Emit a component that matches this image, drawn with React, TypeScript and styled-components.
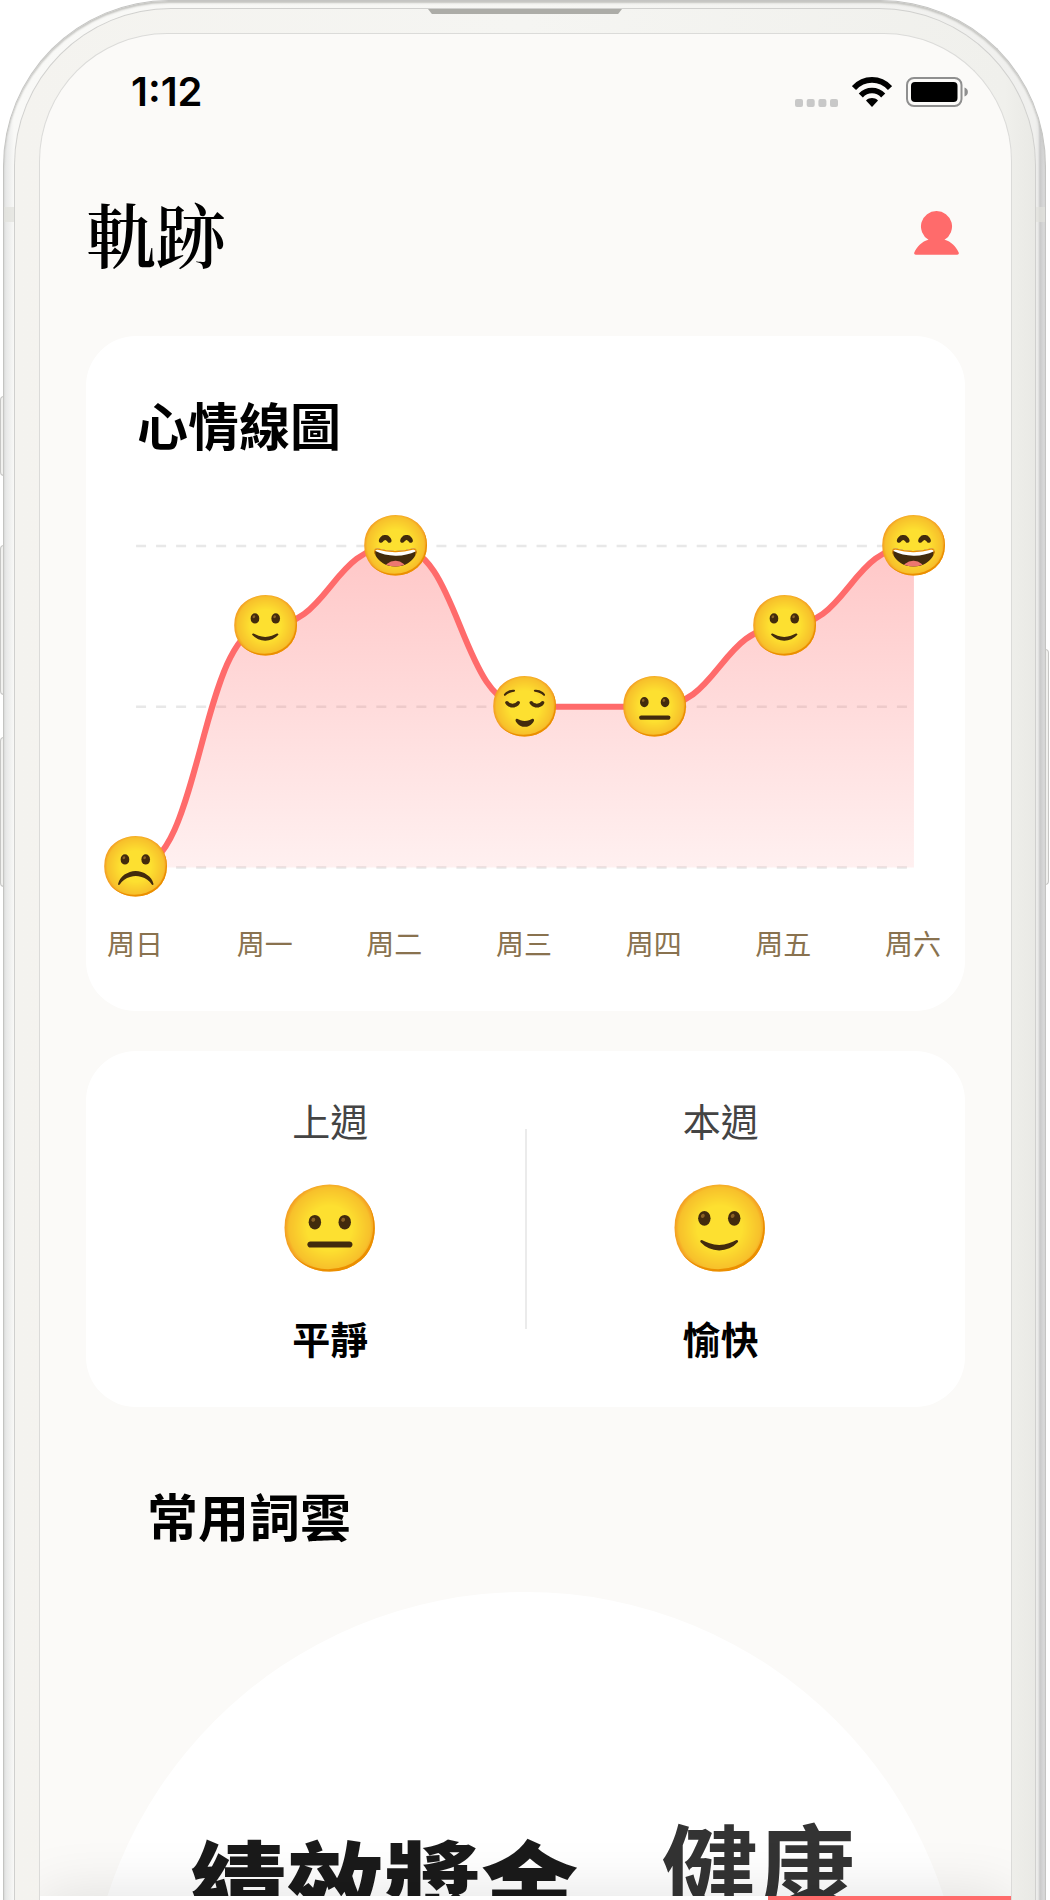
import React from "react";
import styled, { createGlobalStyle } from "styled-components";

const GlobalStyle = createGlobalStyle`
  *, *::before, *::after { box-sizing: border-box; }
  body {
    margin: 0;
    background: #ffffff;
    color: #000000;
    font-family: "Noto Sans CJK TC", "Noto Sans", sans-serif;
  }
  h1, h2, p { margin: 0; }
`;

const Stage = styled.div`
  height: 100vh;
  padding: 0 4px 0 3px;
  overflow: hidden;
`;

const Phone = styled.div`
  position: relative;
  height: calc(100vh + 160px);
  padding: 7px 9px 0 10px;
  border: 1px solid #c4c4c2;
  border-bottom: 0;
  border-radius: 166px 166px 0 0;
  background: linear-gradient(90deg, #e3e4e4 0, #f9f9f7 10px, #f6f6f3 50%, #f0f0ee calc(100% - 10px), #e9e9e8 calc(100% - 7px), #c9c9c9 calc(100% - 5px), #dededf 100%);
  box-shadow: inset 0 2px 2px #c4c4c0;
`;

const SideKey = styled.span<{ $side: "left" | "right"; $top: number; $height: number }>`
  position: absolute;
  top: ${(p) => p.$top}px;
  ${(p) => p.$side}: -4px;
  width: 4px;
  height: ${(p) => p.$height}px;
  border: 1px solid #c6c6c4;
  border-radius: ${(p) => (p.$side === "left" ? "4px 0 0 4px" : "0 4px 4px 0")};
  background: #f1f1ef;
`;

const Antenna = styled.span<{ $side: "left" | "right" }>`
  position: absolute;
  top: 206px;
  ${(p) => p.$side}: 0;
  width: 10px;
  height: 15px;
  background: rgba(225, 225, 220, 0.7);
`;

const Bezel = styled.div`
  position: relative;
  height: 100%;
  padding: 24px 23px 0 24px;
  border: 1px solid #d0d0ce;
  border-bottom: 0;
  border-radius: 157px 157px 0 0;
  background: linear-gradient(90deg, #f4f3ef, #f5f5f2 50%, #f0f0ec 97%, #e9e9e5);
`;

const Speaker = styled.span`
  position: absolute;
  top: 0;
  left: 50%;
  width: 194px;
  height: 5px;
  margin-left: -97px;
  background: #acaca7;
  clip-path: polygon(0 0, 100% 0, 98% 100%, 2% 100%);
`;

const Screen = styled.main`
  display: flex;
  flex-direction: column;
  height: 100%;
  overflow: hidden;
  border: 1px solid #dbdbd9;
  border-bottom: 0;
  border-radius: 128px 128px 0 0;
  background: #fbfaf8;
`;

const StatusBar = styled.div`
  display: flex;
  align-items: center;
  justify-content: space-between;
  padding: 35px 42px 0 91px;
`;

const Clock = styled.time`
  font: 600 40px/46px Inter, sans-serif;
`;

const StatusIcons = styled.div`
  display: flex;
  align-items: center;
  gap: 14px;
`;

const Scroll = styled.div`
  flex: 1;
  min-height: 0;
  overflow: hidden;
  padding: 0 46px;
`;

const Header = styled.header`
  display: flex;
  align-items: center;
  justify-content: space-between;
  height: 100px;
  margin: 68px 0 53px;
`;

const PageTitle = styled.h1`
  font: 600 70px/100px "Noto Serif CJK TC", "Noto Serif CJK SC", "Noto Serif CJK JP", "Noto Serif TC", serif;
`;

const ProfileButton = styled.button`
  display: flex;
  padding: 6px;
  border: 0;
  background: none;
  color: #ff6b6b;
`;

const Card = styled.section`
  border-radius: 50px;
  background: #ffffff;
`;

const MoodCard = styled(Card)`
  padding: 54px 0 48px;
`;

const SectionTitle = styled.h2<{ $inset: number }>`
  padding-left: ${(p) => p.$inset}px;
  font-size: 51px;
  font-weight: 700;
  line-height: 68px;
`;

const ChartSvg = styled.svg`
  display: block;
  width: 100%;
  height: auto;
  margin-top: 6px;
`;

const ChartEmoji = styled.text`
  font-family: "Noto Color Emoji", sans-serif;
  font-size: 59px;
  text-anchor: middle;
`;

const Days = styled.ol`
  display: flex;
  justify-content: space-between;
  margin: 0;
  padding: 0 24px 0 21px;
  list-style: none;
  color: #89724f;
  font-size: 28px;
  line-height: 40px;
`;

const WeekCard = styled(Card)`
  display: flex;
  align-items: center;
  margin-top: 40px;
  padding: 41px 50px;
`;

const Week = styled.div`
  display: flex;
  flex: 1;
  flex-direction: column;
  align-items: center;
  gap: 35px;
  font-size: 38px;
  line-height: 56px;
`;

const WeekLabel = styled.p`
  color: #444444;
`;

const WeekEmoji = styled.p`
  font-family: "Noto Color Emoji", sans-serif;
  font-size: 85px;
  line-height: 92px;
`;

const WeekMood = styled.p`
  font-weight: 700;
`;

const Divider = styled.span`
  width: 2px;
  height: 200px;
  background: #ebebeb;
`;

const CloudSection = styled.section`
  display: flex;
  flex-direction: column;
  gap: 43px;
  margin-top: 74px;
`;

const Cloud = styled.div`
  position: relative;
  width: 100%;
  aspect-ratio: 1;
  border-radius: 50%;
  background: #ffffff;
`;

const Word = styled.span<{ $x: number; $y: number; $size: number; $color: string; $weight: number }>`
  position: absolute;
  left: ${(p) => p.$x}px;
  top: ${(p) => p.$y}px;
  color: ${(p) => p.$color};
  font-size: ${(p) => p.$size}px;
  font-weight: ${(p) => p.$weight};
  line-height: 1;
  white-space: nowrap;
`;

const TabBar = styled.nav`
  position: relative;
  display: flex;
  justify-content: flex-end;
  height: 164px;
  background: #ffffff;
  box-shadow: 0 0 60px rgba(0, 0, 0, 0.12);
`;

const WriteButton = styled.button`
  width: 25%;
  border: 0;
  background: #ff6b6b;
`;

const week = [
  { day: "周日", emoji: "☹️", level: 0 },
  { day: "周一", emoji: "🙂", level: 3 },
  { day: "周二", emoji: "😄", level: 4 },
  { day: "周三", emoji: "😌", level: 2 },
  { day: "周四", emoji: "😐", level: 2 },
  { day: "周五", emoji: "🙂", level: 3 },
  { day: "周六", emoji: "😄", level: 4 },
];

const LEFT = 50;
const RIGHT = 827;
const BASE = 403;
const STEP_Y = 80.25;

const points = week.map((d, i) => ({
  x: LEFT + ((RIGHT - LEFT) / 6) * i,
  y: BASE - d.level * STEP_Y,
  emoji: d.emoji,
}));

const curve = points
  .map((p, i) => {
    if (i === 0) return `M${p.x} ${p.y}`;
    const q = points[i - 1];
    const mid = (p.x + q.x) / 2;
    return `C${mid} ${q.y} ${mid} ${p.y} ${p.x} ${p.y}`;
  })
  .join(" ");

function MoodChart() {
  return (
    <ChartSvg viewBox="0 0 878 458" role="img" aria-label="心情線圖">
      <defs>
        <linearGradient id="area" x1="0" y1="0" x2="0" y2="1">
          <stop offset="0" stopColor="#ff6b6b" stopOpacity="0.38" />
          <stop offset="1" stopColor="#ff6b6b" stopOpacity="0.1" />
        </linearGradient>
      </defs>
      {[4, 2, 0].map((level) => (
        <path
          key={level}
          d={`M${LEFT} ${BASE - level * STEP_Y}H${RIGHT}`}
          stroke="#e8e8e8"
          strokeWidth="2.500"
          strokeDasharray="10 10"
        />
      ))}
      <path d={`${curve} V${BASE} H${LEFT}Z`} fill="url(#area)" />
      <path d={curve} fill="none" stroke="#ff6b6b" strokeWidth="6" />
      {points.map((p) => (
        <ChartEmoji key={p.x} x={p.x + 0.5} y={p.y + 20}>
          {p.emoji}
        </ChartEmoji>
      ))}
    </ChartSvg>
  );
}

function WeekSummary({ label, emoji, name }: { label: string; emoji: string; name: string }) {
  return (
    <Week>
      <WeekLabel>{label}</WeekLabel>
      <WeekEmoji>{emoji}</WeekEmoji>
      <WeekMood>{name}</WeekMood>
    </Week>
  );
}

export default function App() {
  return (
    <>
      <GlobalStyle />
      <Stage>
        <Phone>
          <SideKey $side="left" $top={395} $height={80} />
          <SideKey $side="left" $top={544} $height={150} />
          <SideKey $side="left" $top={736} $height={150} />
          <SideKey $side="right" $top={648} $height={236} />
          <Antenna $side="left" />
          <Antenna $side="right" />
          <Bezel>
            <Speaker />
            <Screen>
              <StatusBar>
                <Clock>1:12</Clock>
                <StatusIcons aria-hidden="true">
                  <svg width="43" height="30" viewBox="0 0 43 30" fill="#c8c8c8">
                    <rect x="0" y="22" width="8" height="8" rx="2" />
                    <rect x="11.700" y="22" width="8" height="8" rx="2" />
                    <rect x="23.400" y="22" width="8" height="8" rx="2" />
                    <rect x="35" y="22" width="8" height="8" rx="2" />
                  </svg>
                  <svg width="40" height="30" viewBox="0 0 40 30">
                    <path d="M2 11C12 .2 28 .2 38 11M8.800 18.500C15 11.800 25 11.800 31.200 18.500" fill="none" stroke="#000000" strokeWidth="5.600" />
                    <path d="M20 30l-6-6.500c3.500-3.200 8.500-3.200 12 0z" />
                  </svg>
                  <svg width="63" height="30" viewBox="0 0 63 30">
                    <rect x="1" y="1" width="54.500" height="28" rx="7" fill="none" stroke="#8f8f8f" strokeWidth="2" />
                    <rect x="5" y="5" width="46.500" height="20" rx="4" />
                    <path d="M58.500 10.500c4.500 1.500 4.500 7.500 0 9z" fill="#8f8f8f" />
                  </svg>
                </StatusIcons>
              </StatusBar>
              <Scroll>
                <Header>
                  <PageTitle>軌跡</PageTitle>
                  <ProfileButton aria-label="個人資料">
                    <svg width="45" height="44" viewBox="0 0 45 44" fill="currentColor">
                      <path d="M22.500 0a15.500 15.500 0 0 1 8 28.800C37 30.500 42 35.500 44.700 41.500c.5 1.300-.2 2.200-1.500 2.200H1.800c-1.300 0-2-.9-1.500-2.200C3 35.500 8 30.500 14.500 28.800A15.500 15.500 0 0 1 22.500 0z" />
                    </svg>
                  </ProfileButton>
                </Header>
                <MoodCard>
                  <SectionTitle $inset={51}>心情線圖</SectionTitle>
                  <MoodChart />
                  <Days>
                    {week.map((d) => (
                      <li key={d.day}>{d.day}</li>
                    ))}
                  </Days>
                </MoodCard>
                <WeekCard>
                  <WeekSummary label="上週" emoji="😐" name="平靜" />
                  <Divider />
                  <WeekSummary label="本週" emoji="🙂" name="愉快" />
                </WeekCard>
                <CloudSection>
                  <SectionTitle $inset={61}>常用詞雲</SectionTitle>
                  <Cloud>
                    <Word $x={104} $y={240} $size={97} $color="#1a1a1a" $weight={900}>績效獎金</Word>
                    <Word $x={575} $y={223} $size={97} $color="#333333" $weight={700}>健康</Word>
                  </Cloud>
                </CloudSection>
              </Scroll>
              <TabBar>
                <WriteButton aria-label="寫日記" />
              </TabBar>
            </Screen>
          </Bezel>
        </Phone>
      </Stage>
    </>
  );
}
